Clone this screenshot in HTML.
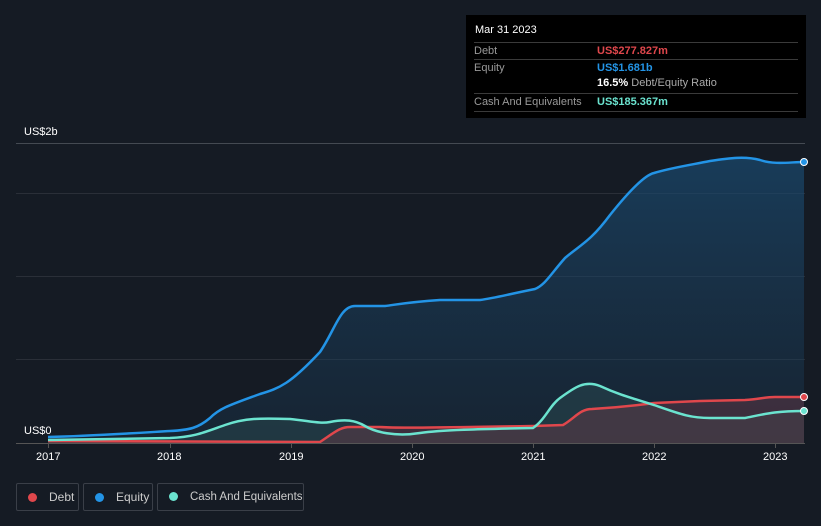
<!DOCTYPE html><html><head><style>
body{margin:0;width:821px;height:526px;background:#151b24;font-family:"Liberation Sans",sans-serif;overflow:hidden;position:relative}
.t{position:absolute;color:#fff;font-size:11px}
.tip{position:absolute;left:466px;top:15px;width:340px;height:103px;background:#000;}
.tip .r{position:absolute;left:8px;width:324px;border-top:1px solid #3a3a3a;font-size:11px;color:#999}
.leg{position:absolute;top:483px;height:28px;border:1px solid #3a3f48;border-radius:2px;color:#ccc;font-size:12px;line-height:26px;box-sizing:border-box;white-space:nowrap;overflow:hidden}
.dot{display:inline-block;width:9px;height:9px;border-radius:50%;margin:0 12px 0 11px;vertical-align:-1px}
</style></head><body>
<svg width="821" height="526" style="position:absolute;left:0;top:0">
<defs><linearGradient id="g" x1="0" y1="0" x2="0" y2="1"><stop offset="0" stop-color="#1a4a70" stop-opacity=".7"/><stop offset="1" stop-color="#1a3a55" stop-opacity=".3"/></linearGradient></defs>
<g stroke="#2a2f38" stroke-width="1"><line x1="16" y1="193.5" x2="805" y2="193.5"/><line x1="16" y1="276.5" x2="805" y2="276.5"/><line x1="16" y1="359.5" x2="805" y2="359.5"/></g>
<line x1="16" y1="143.5" x2="805" y2="143.5" stroke="#444a52"/>
<path d="M48,437 C90,436 120,434 170,431 C190,430 198,428 210,418 C220,408 230,405 260,394 C280,388 290,384 320,352 C335,330 340,306 355,306 L385,306 C400,304 410,302 440,300 L480,300 C495,298 505,295 535,289 C545,285 550,275 565,258 C580,245 590,242 610,215 C630,190 645,175 654,173 C670,168 690,165 710,161 C730,158 745,156 760,160 C775,165 790,162 804,162 L804,443 L48,443Z" fill="url(#g)"/>
<path d="M48,440 L170,438 C195,437 205,432 225,425 C245,418 260,418 290,419 C310,421 320,424 330,422 C345,419 355,420 365,426 C375,432 395,437 420,433 C440,430 480,429 533,428 C545,420 550,405 560,398 C575,387 585,380 600,386 C615,393 625,396 654,405 C680,414 690,418 710,418 L745,418 C765,414 775,411 804,411 L804,443 L48,443Z" fill="#2a4a50" fill-opacity=".5"/>
<path d="M48,441 L320,442 C335,432 340,427 350,427 L380,427 C395,428 410,428 533,426 L563,425 C575,418 580,409 592,409 C610,408 625,407 654,403 L700,401 L745,400 C760,399 765,397 775,397 L804,397 L804,443 L48,443Z" fill="#6a3a48" fill-opacity=".45"/>
<path d="M48,441 L320,442 C335,432 340,427 350,427 L380,427 C395,428 410,428 533,426 L563,425 C575,418 580,409 592,409 C610,408 625,407 654,403 L700,401 L745,400 C760,399 765,397 775,397 L804,397" fill="none" stroke="#e0474c" stroke-width="2.5"/>
<path d="M48,440 L170,438 C195,437 205,432 225,425 C245,418 260,418 290,419 C310,421 320,424 330,422 C345,419 355,420 365,426 C375,432 395,437 420,433 C440,430 480,429 533,428 C545,420 550,405 560,398 C575,387 585,380 600,386 C615,393 625,396 654,405 C680,414 690,418 710,418 L745,418 C765,414 775,411 804,411" fill="none" stroke="#6be3cf" stroke-width="2.5"/>
<path d="M48,437 C90,436 120,434 170,431 C190,430 198,428 210,418 C220,408 230,405 260,394 C280,388 290,384 320,352 C335,330 340,306 355,306 L385,306 C400,304 410,302 440,300 L480,300 C495,298 505,295 535,289 C545,285 550,275 565,258 C580,245 590,242 610,215 C630,190 645,175 654,173 C670,168 690,165 710,161 C730,158 745,156 760,160 C775,165 790,162 804,162" fill="none" stroke="#2394e6" stroke-width="2.5"/>
<line x1="16" y1="443.5" x2="805" y2="443.5" stroke="#555"/>
<g stroke="#555"><line x1="48.5" y1="443" x2="48.5" y2="448"/><line x1="170.5" y1="443" x2="170.5" y2="448"/><line x1="291.5" y1="443" x2="291.5" y2="448"/><line x1="412.5" y1="443" x2="412.5" y2="448"/><line x1="533.5" y1="443" x2="533.5" y2="448"/><line x1="654.5" y1="443" x2="654.5" y2="448"/><line x1="775.5" y1="443" x2="775.5" y2="448"/></g>
<circle cx="804" cy="162" r="3.5" fill="#2394e6" stroke="#fff"/><circle cx="804" cy="397" r="3.5" fill="#e0474c" stroke="#fff"/><circle cx="804" cy="411" r="3.5" fill="#6be3cf" stroke="#fff"/>
</svg>
<div class="t" style="left:24px;top:126px">US$2b</div>
<div class="t" style="left:24px;top:425px">US$0</div>
<div class="t" style="left:36px;top:451px">2017</div><div class="t" style="left:157px;top:451px">2018</div><div class="t" style="left:279px;top:451px">2019</div><div class="t" style="left:400px;top:451px">2020</div><div class="t" style="left:521px;top:451px">2021</div><div class="t" style="left:642px;top:451px">2022</div><div class="t" style="left:763px;top:451px">2023</div>
<div class="tip">
<div style="position:absolute;left:9px;top:9px;color:#fff;font-size:11px">Mar 31 2023</div>
<div class="r" style="top:27px;height:17px;line-height:17px">Debt<span style="position:absolute;left:123px;color:#e0474c;font-weight:bold">US$277.827m</span></div>
<div class="r" style="top:44px;height:17px;line-height:17px">Equity<span style="position:absolute;left:123px;color:#2394e6;font-weight:bold">US$1.681b</span></div>
<div style="position:absolute;left:131px;top:62px;font-size:11px;color:#aaa"><b style="color:#fff">16.5%</b> Debt/Equity Ratio</div>
<div class="r" style="top:78px;height:17px;line-height:17px">Cash And Equivalents<span style="position:absolute;left:123px;color:#6be3cf;font-weight:bold">US$185.367m</span></div>
<div class="r" style="top:96px;height:0"></div>
</div>
<div class="leg" style="left:16px;width:63px"><span class="dot" style="background:#e0474c"></span>Debt</div>
<div class="leg" style="left:83px;width:70px"><span class="dot" style="background:#2394e6"></span>Equity</div>
<div class="leg" style="left:157px;width:147px;font-size:11.5px"><span class="dot" style="background:#6be3cf"></span>Cash And Equivalents</div>
</body></html>
